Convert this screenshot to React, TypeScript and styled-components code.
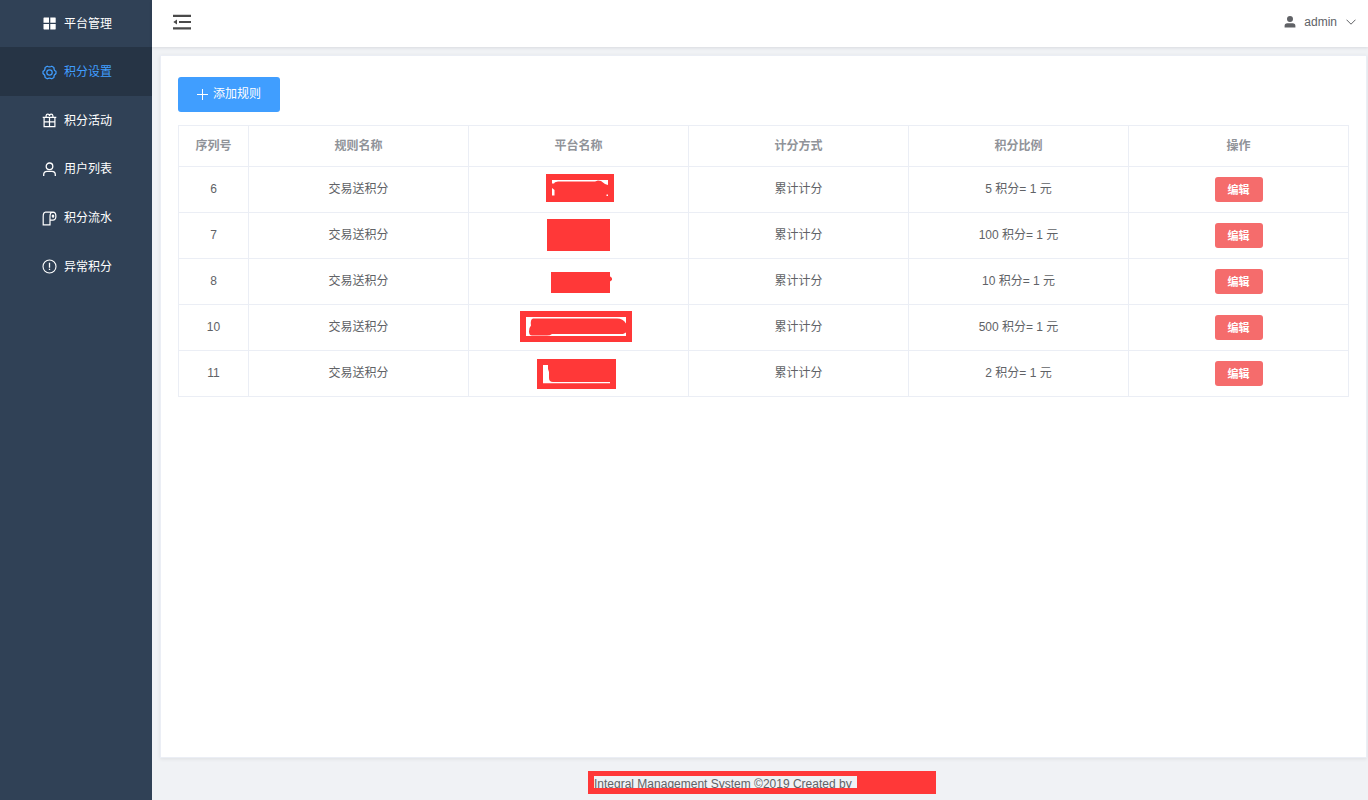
import React from 'react';
import styled, { createGlobalStyle } from 'styled-components';

const GlobalStyle = createGlobalStyle`
  * { box-sizing: border-box; }
  body {
    margin: 0;
    background: #f0f2f5;
    color: #606266;
    font: 12px/18px "Liberation Sans", "Noto Sans CJK SC", sans-serif;
  }
  button { font-family: inherit; cursor: pointer; }
`;

const Layout = styled.div`
  display: flex;
  min-height: 100vh;
`;

const Sidebar = styled.nav`
  flex: 0 0 152px;
  background: #304156;
`;

const SubMenu = styled.div`
  display: flex;
  flex-direction: column;
  height: 243px;
`;

const MenuItem = styled.a<{ $active?: boolean; $title?: boolean }>`
  display: flex;
  align-items: center;
  gap: 7px;
  padding: ${p => (p.$title ? '0 0 0 42px' : '2px 0 0 42px')};
  flex: ${p => (p.$title ? 'none' : '1')};
  height: ${p => (p.$title ? '47px' : 'auto')};
  background: ${p => (p.$active ? '#263445' : 'transparent')};
  color: ${p => (p.$active ? '#409eff' : '#fff')};
  text-decoration: none;
`;

const Icon = styled.svg`
  display: block;
  flex: none;
  fill: none;
  stroke: currentColor;
`;

const Main = styled.div`
  flex: 1;
  min-width: 0;
  display: flex;
  flex-direction: column;
`;

const TopBar = styled.header`
  display: flex;
  align-items: center;
  justify-content: space-between;
  height: 47px;
  padding: 0 12px 3px 20px;
  background: #fff;
  box-shadow: 0 1px 3px rgba(0, 21, 41, 0.1);
`;

const PlainButton = styled.button`
  display: flex;
  align-items: center;
  padding: 0;
  border: 0;
  background: none;
  color: #606266;
  font-size: 12px;
  line-height: 18px;
`;

const UserName = styled.span`
  margin: 0 9px 0 8px;
`;

const Card = styled.main`
  flex: 1;
  margin: 8px 1px 0 8px;
  padding: 21px 17px;
  background: #fff;
  border: 1px solid #ebeef5;
  box-shadow: 0 1px 4px rgba(0, 0, 0, 0.08);
`;

const AddButton = styled.button`
  display: flex;
  align-items: center;
  justify-content: center;
  gap: 5px;
  width: 102px;
  height: 35px;
  margin-bottom: 13px;
  padding: 0 0 1px;
  border: 0;
  border-radius: 3px;
  background: #409eff;
  color: #fff;
  font-size: 12px;
  line-height: 18px;
`;

const RuleTable = styled.table`
  width: 100%;
  table-layout: fixed;
  border-collapse: separate;
  border-spacing: 0;
  border-top: 1px solid #ebeef5;
  border-left: 1px solid #ebeef5;
  text-align: center;
`;

const HeadCell = styled.th<{ $narrow?: boolean }>`
  width: ${p => (p.$narrow ? '70px' : 'auto')};
  height: 41px;
  padding: 0;
  border-right: 1px solid #ebeef5;
  border-bottom: 1px solid #ebeef5;
  color: #909399;
  font-weight: 700;
`;

const Cell = styled.td`
  height: 46px;
  padding: 0 0 2px;
  border-right: 1px solid #ebeef5;
  border-bottom: 1px solid #ebeef5;
`;

const EditButton = styled.button`
  display: block;
  width: 48px;
  height: 25px;
  margin: 2px auto 0;
  padding: 0 0 2px;
  border: 0;
  border-radius: 3px;
  background: #f56c6c;
  color: #fff;
  font-size: 11px;
  font-weight: 700;
`;

const Mask = styled.svg`
  display: block;
  margin: 0 auto;
`;

const Footer = styled.footer`
  display: flex;
  justify-content: center;
  padding: 13px 0 6px 4px;
`;

const FooterMask = styled.div`
  width: 348px;
  height: 23px;
  padding: 5px 6px 6px;
  background: #ff3838;
`;

const FooterText = styled.div`
  width: 263px;
  height: 12px;
  overflow: hidden;
  background: #f0f2f5;
  line-height: 16px;
  white-space: nowrap;
`;

const RED = '#ff3838';

const GridIcon = () => (
  <Icon width="15" height="15" viewBox="0 0 15 15">
    <path fill="currentColor" stroke="none" d="M2 1.500h5v5.300H1.500V2zM8.300 1.500h5l.4.5v4.800H8.300zM1.500 8.100H7v5.400H2l-.5-.5zM8.300 8.100h5.400V13l-.4.5h-5z" />
  </Icon>
);
const GearIcon = () => (
  <Icon width="15" height="15" viewBox="0 0 15 15" strokeWidth="1.2" strokeLinejoin="round">
    <path d="M5.200 1.200Q7.500 2.400 9.800 1.200L11.900 2.500Q11.700 5.300 14 6.400V8.600Q11.700 9.700 11.900 12.500L9.800 13.800Q7.500 12.600 5.200 13.800L3.100 12.500Q3.300 9.700 1 8.600V6.400Q3.300 5.300 3.100 2.500Z" />
    <circle cx="7.5" cy="7.5" r="2.700" />
  </Icon>
);
const GiftIcon = () => (
  <Icon width="15" height="15" viewBox="0 0 15 15" strokeWidth="1.2">
    <path d="M.7 4.400h13.600M2.100 4.400v9.300h10.800V4.400M2.100 8.900h10.800M7.500 4.400v9.300M4.100 4.200V2.700Q4.200 1.200 5.800 1.200Q7.500 1.200 7.500 3Q7.500 1.200 9.200 1.200Q10.800 1.200 10.900 2.700V4.200" />
  </Icon>
);
const PersonIcon = () => (
  <Icon width="15" height="15" viewBox="0 0 15 15" strokeWidth="1.3">
    <circle cx="7.5" cy="4.300" r="3.300" />
    <path d="M1.700 14v-1.200q0-3.500 3.400-3.500h4.800q3.400 0 3.400 3.500V14" />
  </Icon>
);
const PaperIcon = () => (
  <Icon width="15" height="15" viewBox="0 0 15 15" strokeWidth="1.2">
    <path d="M11 1.200H3.600Q1.200 1.400 1.200 5.500V13.800H8V5.200Q8.100 1.200 11 1.200Q13.900 1.300 13.900 5.200Q13.800 9.100 10.800 9.100H8" />
    <ellipse cx="11" cy="5.100" rx=".7" ry="1.100" />
  </Icon>
);
const WarnIcon = () => (
  <Icon width="15" height="15" viewBox="0 0 15 15" strokeWidth="1.1">
    <circle cx="7.5" cy="7.5" r="6.500" />
    <path d="M7.500 3.700v5.100M7.500 9.800v1.300" strokeWidth="1.3" />
  </Icon>
);
const FoldIcon = () => (
  <Icon width="20" height="16" viewBox="0 0 20 16">
    <path fill="#4a4a4a" stroke="none" d="M1 .7h18V3H1zM7 7h12v2.100H7zM1 13.200h18v2.200H1zM5 5.500v5L1.300 8z" />
  </Icon>
);
const AvatarIcon = () => (
  <Icon width="12" height="12" viewBox="0 0 12 12">
    <path fill="#606266" stroke="none" d="M6 0a3 3 0 1 1 0 6a3 3 0 1 1 0-6zM.6 11.600V9.800Q.6 7.200 3.300 7.200h5.400q2.700 0 2.700 2.600v1.800z" />
  </Icon>
);
const ChevronIcon = () => (
  <Icon width="10" height="10" viewBox="0 0 10 10" strokeWidth="1">
    <path d="M.5 2.700L5 7.200L9.500 2.700" />
  </Icon>
);
const PlusIcon = () => (
  <Icon width="11" height="11" viewBox="0 0 11 11" strokeWidth="1">
    <path d="M5.500 0v11M0 5.500h11" />
  </Icon>
);

const menu = [
  { label: '积分设置', icon: <GearIcon />, active: true },
  { label: '积分活动', icon: <GiftIcon /> },
  { label: '用户列表', icon: <PersonIcon /> },
  { label: '积分流水', icon: <PaperIcon /> },
  { label: '异常积分', icon: <WarnIcon /> },
];

const rules = [
  {
    id: 6,
    ratio: 5,
    mask: (
      <>
        <path fill={RED} d="M27 7h68v28H27z" />
        <path fill="#fff" d="M33 13h56v5l-3-1l-4-3l-3-.4l-3 1H39l-3 .6l-1 1.200h-2zM33 21l2.500 2v5.500H33zM87.500 27.500h1.500v1.500h-1.500z" />
      </>
    ),
  },
  { id: 7, ratio: 100, mask: <path fill={RED} d="M28 6h63v32H28z" /> },
  { id: 8, ratio: 10, mask: <path fill={RED} d="M32 13h59v4.500q2.500 1 2 3.500l-2 1.500V34H32z" /> },
  {
    id: 10,
    ratio: 500,
    mask: (
      <>
        <path fill={RED} d="M1 6h112v31H1z" />
        <path fill="#fff" d="M7 12h100v19H7z" />
        <path fill={RED} d="M14 13.500h84q6 0 9 5v9l-3 1.500H33q-2 1.500-5 1.500H13q-3 0-3-4q0-4 2-6q-1-6 2-7z" />
      </>
    ),
  },
  {
    id: 11,
    ratio: 2,
    mask: (
      <>
        <path fill={RED} d="M18 8h79v30H18z" />
        <path fill="#fff" d="M24 14h5v4l1 3v6q0 4 4 4h57v1.300H24z" />
      </>
    ),
  },
];

const columns = ['序列号', '规则名称', '平台名称', '计分方式', '积分比例', '操作'];

export default function App() {
  return (
    <Layout>
      <GlobalStyle />
      <Sidebar>
        <MenuItem href="#" $title>
          <GridIcon />
          平台管理
        </MenuItem>
        <SubMenu>
          {menu.map(m => (
            <MenuItem href="#" key={m.label} $active={m.active}>
              {m.icon}
              {m.label}
            </MenuItem>
          ))}
        </SubMenu>
      </Sidebar>
      <Main>
        <TopBar>
          <PlainButton aria-label="折叠菜单">
            <FoldIcon />
          </PlainButton>
          <PlainButton>
            <AvatarIcon />
            <UserName>admin</UserName>
            <ChevronIcon />
          </PlainButton>
        </TopBar>
        <Card>
          <AddButton>
            <PlusIcon />
            添加规则
          </AddButton>
          <RuleTable>
            <thead>
              <tr>
                {columns.map((c, i) => (
                  <HeadCell key={c} $narrow={i === 0}>
                    {c}
                  </HeadCell>
                ))}
              </tr>
            </thead>
            <tbody>
              {rules.map(r => (
                <tr key={r.id}>
                  <Cell>{r.id}</Cell>
                  <Cell>交易送积分</Cell>
                  <Cell>
                    <Mask width="119" height="43" viewBox="0 0 119 43">
                      {r.mask}
                    </Mask>
                  </Cell>
                  <Cell>累计计分</Cell>
                  <Cell>{`${r.ratio} 积分= 1 元`}</Cell>
                  <Cell>
                    <EditButton>编辑</EditButton>
                  </Cell>
                </tr>
              ))}
            </tbody>
          </RuleTable>
        </Card>
        <Footer>
          <FooterMask>
            <FooterText>Integral Management System ©2019 Created by</FooterText>
          </FooterMask>
        </Footer>
      </Main>
    </Layout>
  );
}
